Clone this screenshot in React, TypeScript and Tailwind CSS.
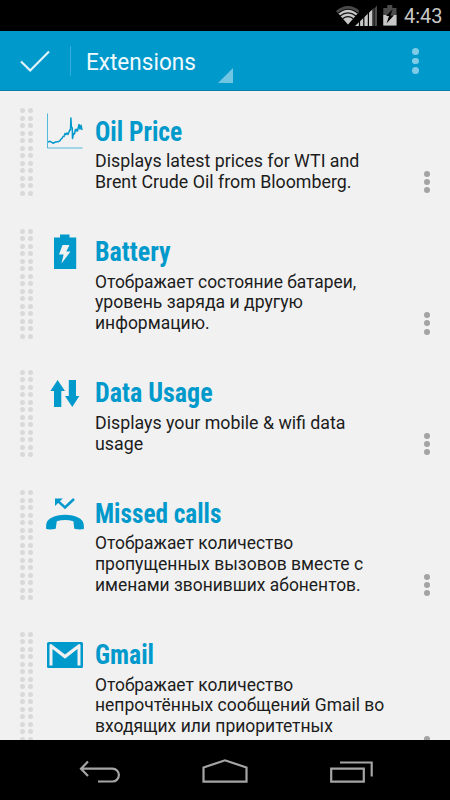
import React from "react";

const BLUE = "#0099cc";

function OilIcon() {
  return (
    <svg width="38" height="38" viewBox="0 0 38 38" fill="none" stroke={BLUE}>
      <path d="M1.5 1.5V36H36.5" strokeWidth="1" opacity=".65" />
      <path strokeWidth="1.5" strokeLinejoin="round" d="M2 30L4 29.3 5.5 30.2 7 31.2 9.5 30 12 29.8 14 28.7 15 27.2 16 26.3 17 24.5 18 24.5 19 21.5 20 22.5 21 21 22 22.5 23 20 24 17.5 24.5 18 24.9 6 25.4 15 26.3 16 26.5 26.5 27.6 21.5 28.5 22 29.4 17.5 30 19 30.5 17.3 31.5 19 33 12.5 34 17 35 13.2 36 18" />
    </svg>
  );
}

function BatteryIcon() {
  return (
    <svg width="38" height="38" viewBox="0 0 38 38">
      <path fill={BLUE} d="M8 4.500H14V1.500H23.5V4.500H30.200V36H8Z" />
      <path fill="#f1f1f1" d="M16.5 12H23.5L20.3 18.5H24.5L15.5 30.5 17.6 21.5H13Z" />
    </svg>
  );
}

function DataIcon() {
  return (
    <svg width="38" height="38" viewBox="0 0 38 38" fill={BLUE}>
      <path d="M11.6 6L19 17H15.3V33H8V17H4.4Z" />
      <path d="M22.8 6H30V22H33.3L26.3 33 19 22H22.8Z" />
    </svg>
  );
}

function MissedIcon() {
  return (
    <svg width="38" height="38" viewBox="0 0 38 38">
      <path fill="none" stroke={BLUE} strokeWidth="2.500" d="M11.2 6.400L19 13.500 28 5" />
      <path fill={BLUE} d="M9 4.600H16.800L9 11.900Z" />
      <path fill={BLUE} d="M.2 35C-.2 29.500 .8 26.300 5 24C9 21.600 14 20.700 19 20.700S29 21.600 33 24C37.200 26.300 38.200 29.500 37.800 35C34.600 35.800 31.500 35.400 28.300 34.700L27.400 27.300Q19 24.700 10.800 27.300L9.700 34.700C6.500 35.400 3.400 35.800 .2 35Z" />
    </svg>
  );
}

function GmailIcon() {
  return (
    <svg width="38" height="38" viewBox="0 0 38 38">
      <rect x="1" y="6" width="36" height="26" rx="1.5" fill={BLUE} />
      <path fill="#f1f1f1" d="M3.500 29.500V9Q4 7.800 5.500 8.200L19 18.500 32.500 8.200Q34 7.800 34.500 9V29.500H31.500V13L19 22.700 6.500 13V29.500Z" />
    </svg>
  );
}

type Line = { text: string; fit: string };

type Item = {
  title: string;
  titleClass: string;
  textClass: string;
  lines: Line[];
  icon: React.ReactNode;
  dots: number;
};

const items: Item[] = [
  {
    title: "Oil Price", titleClass: "scale-x-[0.942]", textClass: "", icon: <OilIcon />, dots: 12,
    lines: [
      { text: "Displays latest prices for WTI and", fit: "scale-x-[0.988]" },
      { text: "Brent Crude Oil from Bloomberg.", fit: "scale-x-[0.988]" },
    ],
  },
  {
    title: "Battery", titleClass: "scale-x-[0.962]", textClass: "", icon: <BatteryIcon />, dots: 15,
    lines: [
      { text: "Отображает состояние батареи,", fit: "scale-x-[0.965]" },
      { text: "уровень заряда и другую", fit: "scale-x-[0.979]" },
      { text: "информацию.", fit: "scale-x-[0.972]" },
    ],
  },
  {
    title: "Data Usage", titleClass: "scale-x-[0.963]", textClass: "", icon: <DataIcon />, dots: 12,
    lines: [
      { text: "Displays your mobile & wifi data", fit: "scale-x-[0.988]" },
      { text: "usage", fit: "scale-x-[0.988]" },
    ],
  },
  {
    title: "Missed calls", titleClass: "scale-x-[0.934]", textClass: "", icon: <MissedIcon />, dots: 15,
    lines: [
      { text: "Отображает количество", fit: "scale-x-[0.966]" },
      { text: "пропущенных вызовов вместе с", fit: "scale-x-[0.974]" },
      { text: "именами звонивших абонентов.", fit: "scale-x-[0.967]" },
    ],
  },
  {
    title: "Gmail", titleClass: "scale-x-[0.95]", textClass: "min-h-[83px]", icon: <GmailIcon />, dots: 15,
    lines: [
      { text: "Отображает количество", fit: "scale-x-[0.966]" },
      { text: "непрочтённых сообщений Gmail во", fit: "scale-x-[0.972]" },
      { text: "входящих или приоритетных", fit: "scale-x-[0.972]" },
    ],
  },
];

function Row({ item }: { item: Item }) {
  return (
    <div className="flex shrink-0 pl-5">
      <div className="flex w-[13px] shrink-0 flex-col gap-[2.5px] pt-[17px]">
        {Array.from({ length: item.dots }, (_, i) => (
          <div key={i} className="flex shrink-0 justify-between">
            <span className="size-[5px] rounded-full bg-[#d9d9d9]" />
            <span className="size-[5px] rounded-full bg-[#d9d9d9]" />
          </div>
        ))}
      </div>
      <div className="ml-[13px] w-[38px] shrink-0 pt-[21px]">{item.icon}</div>
      <div className="ml-[11px] w-[310px] shrink-0 pt-[23.500px] pb-[19.200px]">
        <h2 className={`origin-left whitespace-nowrap text-[27px] leading-[35px] font-bold text-[#0099cc] [font-family:'Roboto_Condensed',Roboto,sans-serif] ${item.titleClass}`}>{item.title}</h2>
        <p className={`mt-[1.5px] whitespace-nowrap text-[18px] leading-[20.700px] font-normal text-[#1c1c1c] ${item.textClass}`}>
          {item.lines.map((l) => (
            <span key={l.text} className={`block origin-left ${l.fit}`}>{l.text}</span>
          ))}
        </p>
      </div>
      <div className="ml-[19px] flex w-[6px] shrink-0 flex-col justify-end gap-[2.300px] pb-[18.300px]">
        <span className="size-[6px] rounded-full bg-[#a3a3a3]" />
        <span className="size-[6px] rounded-full bg-[#a3a3a3]" />
        <span className="size-[6px] rounded-full bg-[#a3a3a3]" />
      </div>
    </div>
  );
}

function StatusBar() {
  return (
    <div className="flex h-[31px] shrink-0 items-center bg-black pl-[336px]">
      <svg width="64" height="31" viewBox="0 0 64 31" className="shrink-0">
        <path d="M0 11Q12 1 24 11L12 24.500Z" fill="#4b4b4b" />
        <path d="M2.300 13.300Q12 5.500 21.700 13.300L12 24.500Z" fill="#c8c8c8" />
        <g fill="none" stroke="#111" strokeWidth="1.200">
          <path d="M2.300 13.300Q12 5.200 21.700 13.300" />
          <path d="M4 15.900Q12 9.800 20 15.900" />
          <path d="M6.500 18.800Q12 14.500 17.500 18.800" />
        </g>
        <path d="M19 26L41 5V26Z" fill="#c8c8c8" />
        <path d="M37.700 5H42V26H37.700Z" fill="#000" />
        <path d="M38.500 8.500L41 5.500V26H38.500Z" fill="#4b4b4b" />
        <path d="M23.500 8V27M27.800 8V27M32.400 8V27M37 6V27" stroke="#000" strokeWidth="1.200" />
        <path d="M47.300 8H51.300V5H56.300V8H60.500V25.500H47.300Z" fill="#4b4b4b" />
        <path d="M47.300 15H60.500V25.500H47.300Z" fill="#c8c8c8" />
        <path d="M56.700 9.300L50 16H53L50.500 23.500 58 15.300H54.500Z" fill="#000" />
      </svg>
      <span className="ml-[4px] origin-left scale-x-[0.95] pt-[2px] text-[21px] leading-[29px] text-[#c8c8c8]">4:43</span>
    </div>
  );
}

export default function App() {
  return (
    <div className="flex h-[800px] w-[450px] flex-col overflow-hidden bg-[#f1f1f1] font-[Roboto,sans-serif]">
      <StatusBar />
      <header className="flex h-[60px] shrink-0 items-center border-b border-[#0a7da6] bg-[#0099cc] pl-5">
        <svg width="31" height="24" viewBox="0 0 31 24" fill="none">
          <path d="M1 12.500L10.200 21.500 29 2.500" stroke="#e2f3fa" strokeWidth="2.200" />
        </svg>
        <div className="ml-[19px] h-[30px] w-px bg-[#33addb]" />
        <div className="ml-[15px] flex h-full w-[147px] items-center justify-between">
          <span className="origin-left scale-x-[0.98] pt-[5px] text-[23px] text-[#f1f9fc]">Extensions</span>
          <svg width="15" height="15" viewBox="0 0 15 15" className="mb-[7px] self-end">
            <path d="M15 0V15H0Z" fill="#6fc5e2" />
          </svg>
        </div>
        <div className="ml-[179px] flex flex-col gap-[2.800px] pt-px">
          <span className="size-[6.500px] rounded-full bg-[#80cce6]" />
          <span className="size-[6.500px] rounded-full bg-[#80cce6]" />
          <span className="size-[6.500px] rounded-full bg-[#80cce6]" />
        </div>
      </header>
      <main className="flex h-[649px] shrink-0 flex-col overflow-hidden">
        {items.map((item) => (
          <Row key={item.title} item={item} />
        ))}
      </main>
      <nav className="flex h-[60px] shrink-0 items-start bg-black pt-[18px] pl-[79px]">
        <svg width="43" height="28" viewBox="0 0 43 28" fill="none" stroke="#a5a5a5" strokeWidth="2.200">
          <path d="M9 3.500L2 10.700 9 18M2 10.700H33.500A6.400 6.400 0 0 1 33.500 23.500H19" />
        </svg>
        <svg width="48" height="28" viewBox="0 0 48 28" className="ml-[79px]" fill="none" stroke="#a5a5a5" strokeWidth="2.200">
          <path d="M2.500 9.500L24 2.300 45.500 9.500V23.600H2.500Z" />
        </svg>
        <svg width="44" height="28" viewBox="0 0 44 28" className="ml-[80px]" fill="none" stroke="#a5a5a5" strokeWidth="2.200">
          <path d="M2.200 10.600H34.800V23.600H2.200ZM11 4.500H42.700V18.500" />
        </svg>
      </nav>
    </div>
  );
}
